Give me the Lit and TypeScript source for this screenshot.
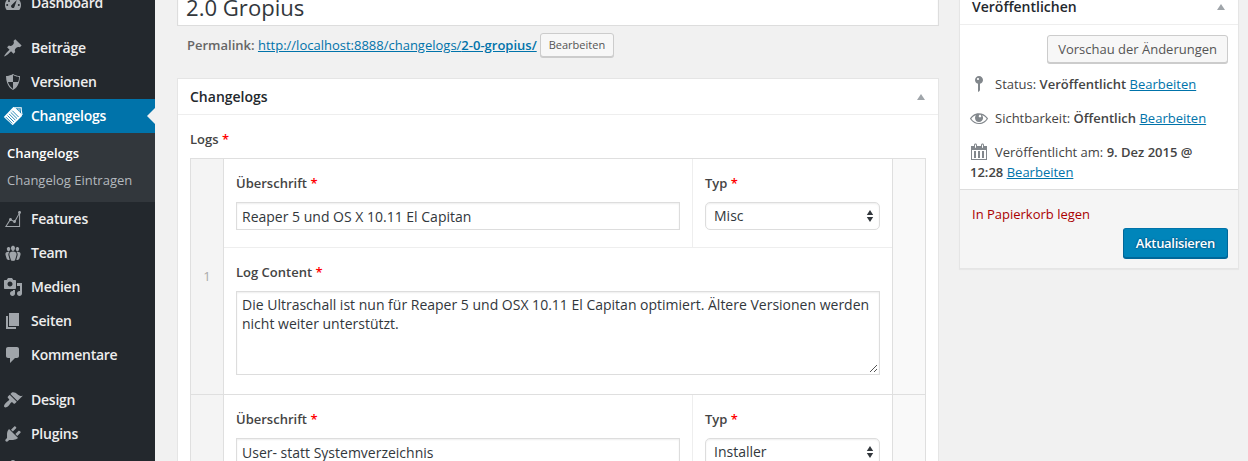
import { LitElement, html, css, svg, nothing } from "lit";
import { customElement, property } from "lit/decorators.js";

const ICONS: Record<string, unknown> = {
  dashboard: svg`<path fill-rule="evenodd" d="M3.76 17h12.48c1.1-1.37 1.76-3.11 1.76-5 0-4.42-3.58-8-8-8s-8 3.58-8 8c0 1.89.66 3.63 1.76 5zM9 6a1 1 0 1 1 2 0 1 1 0 1 1-2 0zM5 8a1 1 0 1 1 2 0 1 1 0 1 1-2 0zM8.4 12.3L13.8 7l-2.5 7.2a1.7 1.7 0 1 1-2.9-1.9zM3.2 12a1 1 0 1 1 2 0 1 1 0 1 1-2 0zM14.8 12a1 1 0 1 1 2 0 1 1 0 1 1-2 0z"/>`,
  post: svg`<path d="M10.44 3.02l1.82-1.82 6.36 6.35-1.83 1.82c-1.05-.68-2.48-.57-3.41.36l-.75.75c-.92.93-1.04 2.35-.35 3.41l-1.83 1.82-2.41-2.41-2.8 2.79c-.42.42-3.38 2.71-3.8 2.29s1.86-3.39 2.28-3.81l2.79-2.79L4.1 9.36l1.83-1.82c1.05.69 2.48.57 3.4-.36l.75-.75c.93-.92 1.05-2.35.36-3.41z"/>`,
  shield: svg`<path d="M10 2s3 2 7 2c0 11-7 14-7 14S3 15 3 4c4 0 7-2 7-2zm0 8h5s1-1 1-5c0 0-5-1-6-2v7H5c1 4 5 7 5 7v-7z"/>`,
  changelogs: svg`<path d="M.8 11 10.300 1 11.800 1.200 18.800 8.200 19 10 9.700 19.300z"/><path d="M12 1.800h6.200v2.400l.9 4.800" fill="none" stroke="currentColor" stroke-width="1.100"/><path d="M14.200 2.600l2.500 0 .4 4z" fill="currentColor" opacity=".55"/><path d="M9.300 4.700l6.300 6.300M7.700 6.300l6.300 6.300M6.100 7.900l6.300 6.300M4.500 9.500l6.300 6.300M2.900 11.100l6.300 6.300" fill="none" stroke="#0073aa" stroke-width=".85"/>`,
  chart: svg`<path d="M18 3.5c0 .62-.38 1.16-.92 1.38v13.11H1.99l4.22-6.73c-.13-.23-.21-.48-.21-.76C6 9.67 6.67 9 7.5 9S9 9.67 9 10.5c0 .13-.02.25-.05.37l1.44.63c.27-.3.67-.5 1.11-.5.18 0 .35.04.51.09l3.58-6.41c-.36-.27-.59-.7-.59-1.18 0-.83.67-1.5 1.5-1.5.19 0 .36.04.53.1l.05-.09v.11c.54.22.92.76.92 1.38zm-1.92 13.49V5.85l-3.29 5.89c.13.23.21.48.21.76 0 .83-.67 1.5-1.5 1.5s-1.5-.67-1.5-1.5l.01-.07-1.63-.72c-.25.18-.55.29-.88.29-.18 0-.35-.04-.51-.1l-3.2 5.09h12.29z"/>`,
  groups: svg`<path d="M8.03 4.46c-.29 1.28.55 3.46 1.97 3.46 1.41 0 2.25-2.18 1.96-3.46-.22-.98-1.08-1.63-1.96-1.63-.89 0-1.74.65-1.97 1.63zm-4.13.9c-.25 1.08.47 2.93 1.67 2.93s1.92-1.85 1.67-2.93c-.19-.83-.92-1.39-1.67-1.39s-1.48.56-1.67 1.39zm8.86 0c-.25 1.08.47 2.93 1.66 2.93 1.2 0 1.92-1.85 1.67-2.93-.19-.83-.92-1.39-1.67-1.39-.74 0-1.47.56-1.66 1.39zm-.59 11.43l1.25-4.3C14.2 10 12.71 8.47 10 8.47c-2.72 0-4.21 1.53-3.44 4.02l1.26 4.3C8.05 17.51 9 18 10 18c.98 0 1.94-.49 2.17-1.21zM5.6 8.8c-2.5 0-3.7 1.300-3 3.400l1.100 3.600c.2.700 1 1.100 1.900 1.100.4 0 .8-.1 1.100-.200l-1.100-3.900c-.5-1.700-.1-3 .9-3.900zM14.400 8.800c2.500 0 3.700 1.300 3 3.400l-1.100 3.600c-.2.700-1 1.100-1.900 1.100-.4 0-.8-.1-1.100-.2l1.100-3.900c.5-1.700.1-3-.9-3.900z"/>`,
  media: svg`<path d="M13 11V4c0-.55-.45-1-1-1h-1.67L9 1H5L3.67 3H2c-.55 0-1 .45-1 1v7c0 .55.45 1 1 1h10c.55 0 1-.45 1-1zM7 4.5c1.38 0 2.5 1.12 2.5 2.5S8.38 9.5 7 9.5 4.5 8.38 4.5 7 5.62 4.5 7 4.5zM14 6h5v10.5c0 1.38-1.12 2.5-2.5 2.5S14 17.88 14 16.5s1.12-2.5 2.5-2.5c.17 0 .34.02.5.05V9h-3V6zm-4 8.05V13h2v3.5c0 1.38-1.12 2.5-2.5 2.5S7 17.88 7 16.5 8.12 14 9.5 14c.17 0 .34.02.5.05z"/>`,
  page: svg`<path d="M6 15V2h10v13H6zm-1 1h8v2H3V5h2v11z"/>`,
  comments: svg`<path d="M5 2h9c1.100 0 2 .9 2 2v7c0 1.100-.9 2-2 2h-2l-5 5v-5H5c-1.100 0-2-.9-2-2V4c0-1.100.9-2 2-2z"/>`,
  appearance: svg`<path d="M14.48 11.06L7.41 3.99l1.5-1.5c.5-.56 2.3-.47 3.51.32 1.21.8 1.43 1.28 2.91 2.1 1.18.64 2.45 1.26 4.45.85zm-.71.71L6.7 4.7 4.93 6.47c-.39.39-.39 1.02 0 1.41l1.06 1.06c.39.39.39 1.03 0 1.42-.6.6-1.43 1.11-2.21 1.69-.35.26-.7.53-1.01.84C1.43 14.23.4 16.08 1.4 17.07c.99 1 2.84-.03 4.18-1.36.31-.31.58-.66.85-1.02.57-.78 1.08-1.61 1.69-2.21.39-.39 1.02-.39 1.41 0l1.06 1.06c.39.39 1.02.39 1.41 0z"/>`,
  plugins: svg`<path d="M13.11 4.36L9.87 7.6 8 5.73l3.24-3.24c.35-.34 1.05-.2 1.56.32.52.51.66 1.21.31 1.55zm-8 1.77l.91-1.12 9.01 9.01-1.19.84c-.71.71-2.63 1.16-3.82 1.16H6.14L4.9 17.26c-.59.59-1.54.59-2.12 0-.59-.58-.59-1.53 0-2.12l1.24-1.24v-3.88c0-1.13.4-3.19 1.09-3.89zm7.26 3.97l3.24-3.24c.34-.35 1.04-.21 1.55.31.52.51.66 1.21.31 1.55l-3.24 3.25z"/>`,
  users: svg`<path d="M10 9.25c-2.27 0-2.73-3.44-2.73-3.44C7 4.02 7.82 2 9.970 2c2.160 0 2.980 2.020 2.710 3.810 0 0-.41 3.440-2.680 3.440z"/>`,
  pin: svg`<path d="M14 6c0 1.86-1.28 3.41-3 3.86V16c0 1-2 2-2 2V9.86c-1.72-.45-3-2-3-3.86 0-2.21 1.79-4 4-4s4 1.790 4 4zM8 5c0 .55.45 1 1 1s1-.45 1-1-.45-1-1-1-1 .45-1 1z"/>`,
  eye: svg`<path d="M18.3 9.5C15 4.9 8.500 3.800 3.900 7.200c-1.200.9-2.200 2.100-3 3.400.2.4.5.8.8 1.200 3.300 4.600 9.600 5.600 14.200 2.400.9-.7 1.700-1.400 2.400-2.400.3-.4.5-.8.8-1.200-.3-.4-.5-.8-.8-1.100zm-8.200-2.300c.5-.5 1.300-.5 1.800 0s.5 1.300 0 1.800-1.300.5-1.800 0-.5-1.300 0-1.800zm-.1 7.700c-3.100 0-6-1.600-7.700-4.200C3.500 9 5.100 7.800 7 7.200c-.7.8-1 1.700-1 2.700 0 2.200 1.700 4.100 4 4.100 2.200 0 4.100-1.700 4.100-4v-.1c0-1-.4-2-1.100-2.700 1.900.6 3.500 1.800 4.700 3.500-1.700 2.600-4.600 4.200-7.700 4.200z"/>`,
  calendar: svg`<path d="M15 4h3v14H2V4h3V3c0-.83.67-1.500 1.500-1.500S8 2.170 8 3v1h4V3c0-.83.67-1.500 1.500-1.500S15 2.170 15 3v1zM6 3v2.500c0 .28.22.5.5.5s.5-.22.5-.5V3c0-.28-.22-.5-.5-.5S6 2.720 6 3zm7 0v2.500c0 .28.22.5.5.5s.5-.22.5-.5V3c0-.28-.22-.5-.5-.5s-.5.22-.5.5zm4 14V8H3v9h14zM7 16V9H5v7h2zm4 0V9H9v7h2zm4 0V9h-2v7h2z"/>`,
};

const icon = (name: string) =>
  html`<svg class="icon" viewBox="0 0 20 20" width="20" height="20" fill="currentColor">${ICONS[name]}</svg>`;

const toggle = html`<svg class="toggle" viewBox="0 0 8 6" width="8" height="6"><path d="M4 0l4 6H0z" fill="#a0a5aa"/></svg>`;

const base = css`
  * { box-sizing: border-box; }
  .icon { display: block; flex: none; }
  a { color: #0073aa; text-decoration: underline; }
  b { font-weight: 600; }
`;

@customElement("admin-menu")
class AdminMenu extends LitElement {
  static styles = [base, css`
    :host { display: block; background: #23282d; overflow: hidden; }
    .list { display: flex; flex-direction: column; margin-top: -14px; }
    .item { height: 34px; display: flex; align-items: center; padding-left: 3px; gap: 8px; color: #eee; font-size: 14px; font-weight: 600; letter-spacing: -0.25px; flex: none; }
    .item .icon { color: #a0a5aa; }
    .text { padding-bottom: 2px; }
    .gap { height: 11px; flex: none; }
    .active { background: #0073aa; color: #fff; }
    .active .icon { color: #fff; }
    .arrow { margin-left: auto; border: 8px solid transparent; border-right-color: #f1f1f1; border-left: 0; }
    .sub { height: 69px; flex: none; background: #32373c; padding: 7px 7px 0; font-size: 13px; line-height: 27px; color: #b4b9be; white-space: nowrap; }
    .current { color: #fff; font-weight: 600; }
  `];

  private item(name: string, label: string, active = false) {
    return html`<div class="item ${active ? "active" : ""}">${icon(name)}<span class="text">${label}</span>${active ? html`<i class="arrow"></i>` : nothing}</div>`;
  }

  render() {
    return html`<nav class="list">
      ${this.item("dashboard", "Dashboard")}
      <div class="gap"></div>
      ${this.item("post", "Beiträge")}
      ${this.item("shield", "Versionen")}
      ${this.item("changelogs", "Changelogs", true)}
      <div class="sub"><div class="current">Changelogs</div><div>Changelog Eintragen</div></div>
      ${this.item("chart", "Features")}
      ${this.item("groups", "Team")}
      ${this.item("media", "Medien")}
      ${this.item("page", "Seiten")}
      ${this.item("comments", "Kommentare")}
      <div class="gap"></div>
      ${this.item("appearance", "Design")}
      ${this.item("plugins", "Plugins")}
      ${this.item("users", "")}
    </nav>`;
  }
}

@customElement("log-row")
class LogRow extends LitElement {
  @property() order = "";
  @property() heading = "";
  @property() kind = "";
  @property() content = "";

  static styles = [base, css`
    :host { display: grid; grid-template-columns: 33px 668px 33px; height: 236px; border-bottom: 1px solid #dfdfdf; }
    .handle { background: #f4f4f4; border-right: 1px solid #dfdfdf; display: flex; align-items: center; justify-content: center; color: #aaa; font-size: 13px; padding-bottom: 2px; }
    .actions { background: #f9f9f9; border-left: 1px solid #dfdfdf; }
    .top { display: grid; grid-template-columns: 468px 1fr; height: 89px; border-bottom: 1px solid #eee; }
    .cell { padding: 15px 12px 0; }
    .kind { border-left: 1px solid #eee; }
    .label { height: 28px; line-height: 19px; font-weight: 600; font-size: 13px; color: #444; }
    .req { color: #f00; }
    .input, .area, .select { border: 1px solid #ddd; background: #fff; color: #32373c; font-size: 14px; box-shadow: inset 0 1px 2px rgba(0,0,0,.07); }
    .input { height: 28px; line-height: 27px; padding: 0 5px; }
    .select { height: 28px; border-radius: 5px; padding: 0 5px 1px 8px; display: flex; align-items: center; justify-content: space-between; }
    .area { height: 84px; padding: 3px 5px 4px; line-height: 19.4px; display: flex; justify-content: space-between; }
    .grip { align-self: flex-end; flex: none; margin: 0 -4px -3px -8px; }
  `];

  private label(text: string) {
    return html`<div class="label">${text} <span class="req">*</span></div>`;
  }

  render() {
    return html`
      <div class="handle">${this.order}</div>
      <div>
        <div class="top">
          <div class="cell">${this.label("Überschrift")}<div class="input">${this.heading}</div></div>
          <div class="cell kind">${this.label("Typ")}
            <div class="select">${this.kind}<svg width="8" height="14" viewBox="0 0 8 14"><path d="M4 1l3.200 5H.8zM4 13L.8 8h6.400z" fill="#32373c"/></svg></div>
          </div>
        </div>
        <div class="cell">${this.label("Log Content")}
          <div class="area"><span>${this.content}</span>
            <svg class="grip" width="9" height="9" viewBox="0 0 9 9"><path d="M1 8l7-7M5 8l3-3" stroke="#555" stroke-width="1" fill="none"/></svg>
          </div>
        </div>
      </div>
      <div class="actions"></div>`;
  }
}

@customElement("publish-box")
class PublishBox extends LitElement {
  static styles = [base, css`
    :host { display: block; height: 282px; margin-top: -13px; background: #fff; border: 1px solid #e5e5e5; box-shadow: 0 1px 1px rgba(0,0,0,.04); font-size: 13px; color: #444; }
    .head { height: 37px; border-bottom: 1px solid #eee; display: flex; align-items: center; justify-content: space-between; padding: 0 14px 0 12px; font-size: 14px; font-weight: 600; color: #23282d; }
    .toggle { margin: 2px -0.5px 0 0; }
    .preview { display: flex; justify-content: flex-end; padding: 10px 10px 0; height: 43px; }
    .button { height: 28px; line-height: 26px; border: 1px solid #ccc; border-radius: 3px; background: #f7f7f7; box-shadow: 0 1px 0 #ccc; padding: 0 10px; color: #555; }
    .row { height: 34px; display: flex; align-items: center; padding: 0 10px 2px 9px; gap: 6px; white-space: pre; }
    .icon { color: #82878c; }
    .date { height: 48px; padding: 6px 10px 0; line-height: 20px; }
    .date .icon { display: inline-block; vertical-align: top; margin: 0 6px 0 -1px; }
    .foot { height: 79px; margin-top: 5px; background: #f5f5f5; border-top: 1px solid #ddd; padding: 14px 10px 0 12px; display: flex; flex-direction: column; }
    .trash { color: #a00; line-height: 20px; }
    .primary { align-self: flex-end; margin-top: 4px; height: 30px; line-height: 28px; border: 1px solid; border-color: #0073aa #006799 #006799; border-radius: 3px; background: #0085ba; box-shadow: 0 1px 0 #006799; color: #fff; font-weight: 600; letter-spacing: -0.3px; padding: 0 12px; text-shadow: 0 -1px 1px #006799, 1px 0 1px #006799, 0 1px 1px #006799, -1px 0 1px #006799; }
  `];

  render() {
    return html`
      <div class="head"><span>Veröffentlichen</span>${toggle}</div>
      <div class="preview"><span class="button">Vorschau der Änderungen</span></div>
      <div class="row">${icon("pin")}<span>Status: <b>Veröffentlicht</b> <a>Bearbeiten</a></span></div>
      <div class="row">${icon("eye")}<span>Sichtbarkeit: <b>Öffentlich</b> <a>Bearbeiten</a></span></div>
      <div class="date">${icon("calendar")}Veröffentlicht am: <b>9. Dez 2015 @<br>12:28</b> <a>Bearbeiten</a></div>
      <div class="foot"><span class="trash">In Papierkorb legen</span><span class="primary">Aktualisieren</span></div>`;
  }
}

@customElement("app-root")
class AppRoot extends LitElement {
  static styles = [base, css`
    :host { display: grid; grid-template-columns: 155px 1fr; height: 461px; overflow: hidden; background: #f1f1f1; font-family: "Open Sans", sans-serif; font-size: 13px; color: #444; }
    .content { display: grid; grid-template-columns: 762px 280px; gap: 20px; padding-left: 22px; height: 461px; overflow: hidden; align-items: start; }
    .title { height: 38px; margin-top: -12px; background: #fff; border: 1px solid #ddd; padding: 0 8px; font-size: 22.1px; line-height: 36px; color: #32373c; box-shadow: inset 0 1px 2px rgba(0,0,0,.07); }
    .permalink { height: 52px; padding: 7px 10px 0; display: flex; align-items: flex-start; line-height: 24px; color: #666; white-space: pre; }
    .small { margin-left: 3px; height: 24px; line-height: 22px; border: 1px solid #ccc; border-radius: 3px; background: #f7f7f7; box-shadow: 0 1px 0 #ccc; padding: 0 8px; font-size: 11px; color: #555; }
    .box { background: #fff; border: 1px solid #e5e5e5; }
    .head { height: 36px; border-bottom: 1px solid #eee; display: flex; align-items: center; justify-content: space-between; padding: 0 13.500px 0 12px; font-size: 14px; font-weight: 600; color: #23282d; }
    .body { padding: 15px 12px; }
    .label { height: 28px; line-height: 19px; font-weight: 600; }
    .req { color: #f00; }
    .table { border: 1px solid #dfdfdf; width: 736px; }
  `];

  render() {
    return html`
      <admin-menu></admin-menu>
      <div class="content">
        <main>
          <div class="title">2.0 Gropius</div>
          <div class="permalink"><span><b>Permalink:</b> <a>http://localhost:8888/changelogs/<b>2-0-gropius/</b></a></span><span class="small">Bearbeiten</span></div>
          <section class="box">
            <div class="head"><span>Changelogs</span>${toggle}</div>
            <div class="body">
              <div class="label">Logs <span class="req">*</span></div>
              <div class="table">
                <log-row order="1" heading="Reaper 5 und OS X 10.11 El Capitan" kind="Misc" content="Die Ultraschall ist nun für Reaper 5 und OSX 10.11 El Capitan optimiert. Ältere Versionen werden nicht weiter unterstützt."></log-row>
                <log-row heading="User- statt Systemverzeichnis" kind="Installer"></log-row>
              </div>
            </div>
          </section>
        </main>
        <publish-box></publish-box>
      </div>`;
  }
}
